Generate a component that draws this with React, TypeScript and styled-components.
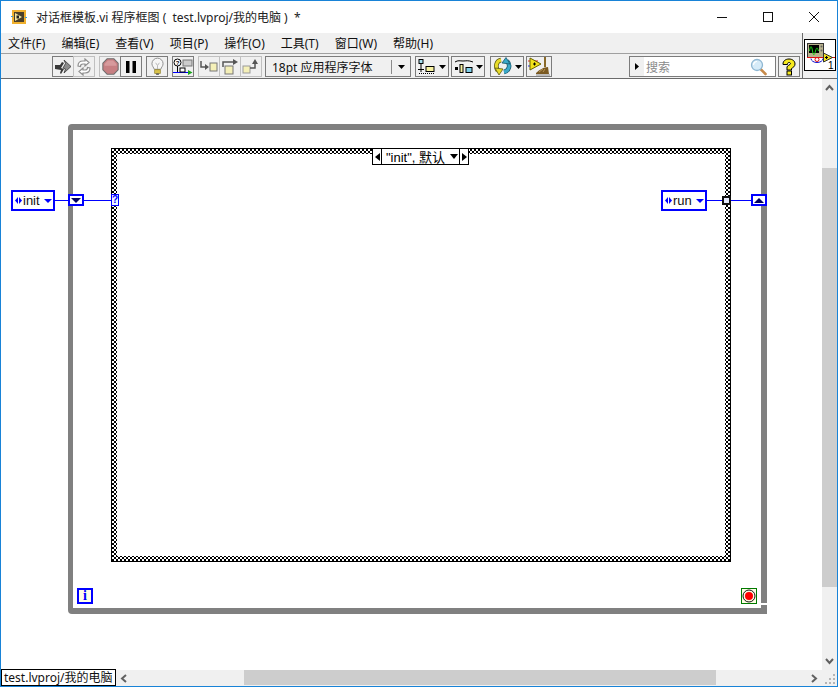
import React from 'react';
import styled, { createGlobalStyle } from 'styled-components';

const GlobalStyle = createGlobalStyle`
  html, body {
    margin: 0;
    padding: 0;
    background: #fff;
    overflow: hidden;
  }
`;

const UI_FONT = `"Noto Sans", "Noto Sans CJK SC", sans-serif`;
const LV_FONT = `"Liberation Sans", "Noto Sans CJK SC", sans-serif`;
const WIRE = '#0000ff';

// --- Window chrome ---
const Window = styled.div`
  width: 838px;
  height: 687px;
  box-sizing: border-box;
  border: 1px solid #1883d7;
  display: flex;
  flex-direction: column;
  background: #fff;
  font-family: ${UI_FONT};
  overflow: hidden;
`;

const TitleBar = styled.div`
  height: 32px;
  flex: none;
  display: flex;
  align-items: center;
  padding-left: 10px;
`;

const TitleText = styled.span`
  margin-left: 9px;
  font-size: 12px;
  color: #222;
  white-space: pre;
`;

const Caption = styled.div`
  margin-left: auto;
  display: flex;
`;

const CaptionButton = styled.div`
  width: 46px;
  height: 32px;
  display: flex;
  align-items: center;
  justify-content: center;
`;

const Upper = styled.div`
  flex: none;
  display: flex;
  height: 46px;
  box-sizing: border-box;
  background: #f0f0f0;
  border-bottom: 1px solid #6b6b6b;
`;

const Bars = styled.div`
  width: 801px;
  flex: none;
`;

const MenuBar = styled.div`
  height: 20px;
  display: flex;
  align-items: center;
  gap: 16px;
  padding-left: 7px;
  border-bottom: 1px solid #a0a0a0;
  font-size: 12px;
  color: #111;
`;

const ToolBar = styled.div`
  height: 24px;
  box-sizing: border-box;
  display: flex;
  align-items: flex-start;
  padding: 2px 0 0 51px;
`;

const ToolGroup = styled.div<{ $gap?: number }>`
  display: flex;
  margin-left: ${p => p.$gap ?? 0}px;
`;

const ToolButton = styled.div<{ $w?: number; $dim?: boolean; $flush?: boolean }>`
  width: ${p => p.$w ?? 22}px;
  height: 21px;
  box-sizing: border-box;
  border: 1px solid ${p => (p.$dim ? '#c0c0c0' : '#7c7c7c')};
  margin-left: ${p => (p.$flush ? -1 : 0)}px;
  display: flex;
  align-items: center;
  justify-content: center;
  gap: 2px;
`;

const FontRing = styled.div`
  width: 146px;
  height: 21px;
  margin-left: 3px;
  box-sizing: border-box;
  border: 1px solid #7c7c7c;
  display: flex;
  align-items: center;
  font-size: 12px;
  color: #111;
`;

const FontName = styled.span`
  flex: 1;
  padding-left: 6px;
`;

const FontArrow = styled.div`
  width: 18px;
  height: 14px;
  border-left: 1px solid #8a8a8a;
  display: flex;
  align-items: center;
  justify-content: center;
`;

const SearchBox = styled.div`
  width: 147px;
  height: 21px;
  margin-left: 77px;
  box-sizing: border-box;
  border: 1px solid #7c7c7c;
  display: flex;
  align-items: center;
`;

const SearchHandle = styled.div`
  width: 14px;
  height: 19px;
  flex: none;
  display: flex;
  align-items: center;
  justify-content: center;
`;

const SearchField = styled.div`
  flex: 1;
  height: 19px;
  background: #fff;
  display: flex;
  align-items: center;
  justify-content: space-between;
  padding: 0 7px 0 2px;
  font-size: 12px;
  color: #8a8a8a;
`;

const IconPaneSlot = styled.div`
  flex: 1;
  border-left: 1px solid #6b6b6b;
  padding: 6px 0 0 1px;
`;

const IconPane = styled.div`
  width: 32px;
  height: 32px;
  box-sizing: border-box;
  border: 1px solid #000;
  background: #fff;
  display: flex;
`;

// --- Body and scrollbars ---
const Body = styled.div`
  flex: 1;
  display: flex;
  min-height: 0;
`;

const Canvas = styled.div`
  position: relative;
  flex: 1;
  background: #fff;
  overflow: hidden;
`;

const VScroll = styled.div`
  width: 15px;
  flex: none;
  background: #f0f0f0;
  display: flex;
  flex-direction: column;
  align-items: center;
`;

const VGap = styled.div`
  height: 72px;
  flex: none;
`;

const VThumb = styled.div`
  width: 15px;
  height: 419px;
  flex: none;
  background: #cdcdcd;
`;

const VArrow = styled.div<{ $end?: boolean }>`
  margin-top: ${p => (p.$end ? 'auto' : '0')};
  height: 17px;
  flex: none;
  display: flex;
  align-items: center;
  justify-content: center;
`;

const BottomBar = styled.div`
  height: 16px;
  flex: none;
  display: flex;
  background: #f0f0f0;
`;

const StatusPath = styled.div`
  width: 115px;
  flex: none;
  box-sizing: border-box;
  background: #fff;
  border: 1px solid #000;
  margin-top: -1px;
  height: 17px;
  padding-left: 2px;
  font-family: ${UI_FONT};
  font-size: 12px;
  line-height: 15px;
  color: #111;
  white-space: nowrap;
  overflow: hidden;
  position: relative;
`;

const HArrow = styled.div`
  width: 16px;
  flex: none;
  display: flex;
  align-items: center;
  justify-content: center;
`;

const HTrack = styled.div`
  flex: 1;
  padding-left: 112px;
  padding-right: 89px;
`;

const HThumb = styled.div`
  height: 15px;
  background: #cdcdcd;
`;

const Grip = styled.div`
  width: 16px;
  flex: none;
  display: flex;
  align-items: flex-end;
  justify-content: flex-end;
`;

// --- Block diagram nodes (free canvas) ---
const WhileLoop = styled.div`
  position: absolute;
  left: 67px;
  top: 45px;
  width: 699px;
  height: 490px;
  box-sizing: border-box;
  border: solid #808080;
  border-width: 6px 6px 6px 5px;
  border-radius: 4px 4px 0 4px;
`;

const LoopNotch = styled.div`
  position: absolute;
  left: 759px;
  top: 524px;
  width: 7px;
  height: 2px;
  background: #fff;
`;

const CaseFrame = styled.div`
  position: absolute;
  left: 110px;
  top: 69px;
  width: 620px;
  height: 414px;
  box-sizing: border-box;
  border: 1px solid #000;
  padding: 5px;
  background-color: #fff;
  background-image: repeating-conic-gradient(#000 0 25%, #fff 0 50%);
  background-size: 4px 4px;
`;

const CaseInner = styled.div`
  width: 100%;
  height: 100%;
  background: #fff;
`;

const CaseSelector = styled.div`
  position: absolute;
  left: 371px;
  top: 69px;
  width: 97px;
  height: 17px;
  box-sizing: border-box;
  display: flex;
  background: #fff;
  border: 1px solid #000;
`;

const SelectorStep = styled.div`
  width: 8px;
  flex: none;
  display: flex;
  align-items: center;
  justify-content: center;
`;

const SelectorLabel = styled.div`
  flex: 1;
  border: solid #000;
  border-width: 0 1px;
  display: flex;
  align-items: center;
  padding: 0 1px 0 4px;
  font-family: ${LV_FONT};
  font-size: 13px;
  color: #000;
  white-space: pre;
`;

const SelectorText = styled.span`
  flex: 1;
`;

const EnumConstant = styled.div<{ $x: number; $w: number }>`
  position: absolute;
  left: ${p => p.$x}px;
  top: 111px;
  width: ${p => p.$w}px;
  height: 21px;
  box-sizing: border-box;
  border: 2px solid ${WIRE};
  background: #fff;
  display: flex;
  align-items: center;
  padding: 0 1px 0 2px;
  font-family: ${LV_FONT};
  font-size: 13px;
  color: #111;
`;

const EnumText = styled.span`
  margin-left: 1px;
  flex: 1;
`;

const Wire = styled.div<{ $x: number; $w: number }>`
  position: absolute;
  left: ${p => p.$x}px;
  top: 121px;
  width: ${p => p.$w}px;
  height: 1px;
  background: ${WIRE};
`;

const ShiftRegister = styled.div<{ $x: number }>`
  position: absolute;
  left: ${p => p.$x}px;
  top: 115px;
  width: 16px;
  height: 12px;
  box-sizing: border-box;
  border: 2px solid ${WIRE};
  background: #fff;
  display: flex;
  align-items: center;
  justify-content: center;
`;

const CaseTerminal = styled.div`
  position: absolute;
  left: 110px;
  top: 115px;
  width: 8px;
  height: 12px;
  box-sizing: border-box;
  border: 1px solid ${WIRE};
  background: #eef4ff;
  color: ${WIRE};
  font-family: ${LV_FONT};
  font-weight: 700;
  font-size: 10px;
  line-height: 10px;
  text-align: center;
`;

const Tunnel = styled.div`
  position: absolute;
  left: 721px;
  top: 117px;
  width: 9px;
  height: 9px;
  box-sizing: border-box;
  border: 2px solid #111;
  background: #e4e8fb;
`;

const IterationTerminal = styled.div`
  position: absolute;
  left: 76px;
  top: 509px;
  width: 16px;
  height: 16px;
  box-sizing: border-box;
  border: 2px solid ${WIRE};
  background: #ffffe6;
  color: ${WIRE};
  font-family: "Liberation Serif", serif;
  font-weight: 700;
  font-size: 14px;
  line-height: 12px;
  text-align: center;
`;

const StopTerminal = styled.div`
  position: absolute;
  left: 740px;
  top: 509px;
  width: 16px;
  height: 16px;
  box-sizing: border-box;
  border: 1px solid #007a00;
  background: #ffffe6;
  display: flex;
  align-items: center;
  justify-content: center;
`;

// --- Drawn icons ---
const Tri = ({ dir, color = '#000', w = 7, h = 4 }: { dir: 'up' | 'down' | 'left' | 'right'; color?: string; w?: number; h?: number }) => {
  const pts = {
    down: `0,0 ${w},0 ${w / 2},${h}`,
    up: `0,${h} ${w},${h} ${w / 2},0`,
    left: `${w},0 ${w},${h} 0,${h / 2}`,
    right: `0,0 0,${h} ${w},${h / 2}`,
  }[dir];
  return (
    <svg width={w} height={h} viewBox={`0 0 ${w} ${h}`}>
      <polygon points={pts} fill={color} />
    </svg>
  );
};

const LvTitleIcon = () => (
  <svg width="16" height="15" viewBox="0 0 16 15">
    <rect x="1" y="0" width="14" height="14" fill="#f0b02e" />
    <rect x="3" y="2" width="10" height="10" fill="#4a3f2a" />
    <polygon points="4,3 11,7 4,11" fill="#f4e6a0" />
    <rect x="5.500" y="5.500" width="2.500" height="3" fill="#222" />
    <path d="M0 6.500h2M14 7.500h2" stroke="#3f9fd0" />
  </svg>
);

// broken run arrow
const RunIcon = () => (
  <svg width="18" height="18" viewBox="0 0 18 18">
    <path d="M1 7h5l2-3 2 1-3 5 3 1-3 5-1-1 1-3-6-1z" fill="#3a3a3a" />
    <path d="M10 2l7 6.500-7 6.500 1.500-4-2.500-1 2.500-4.500z" fill="#8c8c8c" stroke="#3a3a3a" strokeWidth="0.800" strokeLinejoin="round" />
  </svg>
);

const RunContinuousIcon = () => (
  <svg width="18" height="18" viewBox="0 0 18 18" fill="none" stroke="#8e8e8e" strokeWidth="1.200">
    <path d="M3 8c0-3 2-5 5-5h2V1l4 3.500L10 8V6H8C6 6 5.500 7 5.500 8.500z" fill="#fff" />
    <path d="M15 10c0 3-2 5-5 5H8v2l-4-3.500L8 10v2h2c2 0 2.500-1 2.500-2.500z" fill="#fff" />
  </svg>
);

const AbortIcon = () => (
  <svg width="17" height="17" viewBox="0 0 20 20">
    <polygon points="6,1 14,1 19,6 19,14 14,19 6,19 1,14 1,6" fill="#c77f82" stroke="#6e6e6e" strokeWidth="1.200" />
    <polygon points="7,3 13,3 17,7 17,9 3,9 3,7" fill="#d79a9c" />
  </svg>
);

const PauseIcon = () => (
  <svg width="12" height="12" viewBox="0 0 12 12">
    <rect x="1" y="0" width="3.500" height="12" fill="#000" />
    <rect x="7.500" y="0" width="3.500" height="12" fill="#000" />
  </svg>
);

const BulbIcon = () => (
  <svg width="13" height="19" viewBox="0 0 14 20">
    <path d="M7 1a6 6 0 0 0-6 6c0 2.500 2 4 2.500 6h7C11 11 13 9.500 13 7a6 6 0 0 0-6-6z" fill="#f6f6f6" stroke="#8a8a8a" />
    <path d="M5 6l2 3 2-3M7 9v4" stroke="#b5b5b5" fill="none" />
    <rect x="4" y="13.500" width="6" height="4" fill="#d9c24a" stroke="#8a7a20" strokeWidth="0.700" />
    <rect x="5.500" y="17.500" width="3" height="1.500" fill="#555" />
  </svg>
);

const RetainIcon = () => (
  <svg width="20" height="18" viewBox="0 0 20 18">
    <circle cx="4.500" cy="4.500" r="3.500" fill="#fff" stroke="#000" />
    <text x="4.500" y="7" textAnchor="middle" fontSize="6" fontFamily="Liberation Sans" fontWeight="700">?</text>
    <rect x="10" y="2" width="9" height="6" fill="#ccc" stroke="#777" />
    <path d="M4.500 8v6" stroke="#000" />
    <path d="M0 14.500h16" stroke="#0000ff" />
    <rect x="7" y="10" width="5" height="4" fill="#fff" stroke="#000" />
    <polygon points="15,12 19.500,14.500 15,17" fill="#19a319" />
  </svg>
);

const StepIntoIcon = () => (
  <svg width="18" height="14" viewBox="0 0 18 14">
    <path d="M1 1v6h5" stroke="#555" strokeWidth="1.500" fill="none" />
    <polygon points="5,4 9,7 5,10" fill="#555" />
    <rect x="10" y="3" width="7" height="8" fill="#f5f0b8" stroke="#777" />
  </svg>
);

const StepOverIcon = () => (
  <svg width="18" height="16" viewBox="0 0 18 16">
    <path d="M2 8V3h10" stroke="#555" strokeWidth="1.500" fill="none" />
    <polygon points="12,0 17,3 12,6" fill="#555" />
    <rect x="4" y="7" width="8" height="8" fill="#f5f0b8" stroke="#777" />
  </svg>
);

const StepOutIcon = () => (
  <svg width="18" height="16" viewBox="0 0 18 16">
    <rect x="1" y="7" width="7" height="7" fill="#f5f0b8" stroke="#999" />
    <path d="M8 9h5V4" stroke="#555" strokeWidth="1.500" fill="none" />
    <polygon points="10,5 13,0 16,5" fill="#555" />
  </svg>
);

const AlignIcon = () => (
  <svg width="19" height="16" viewBox="0 0 19 16">
    <rect x="1" y="0.500" width="4" height="4" fill="#a6e0f2" stroke="#000" />
    <path d="M3 5v8M0 10.500h6" stroke="#000" />
    <rect x="8" y="7.500" width="8" height="5" fill="#f7f2a0" stroke="#000" />
    <path d="M1 14.500h16" stroke="#000" strokeDasharray="1 1" />
  </svg>
);

const DistributeIcon = () => (
  <svg width="20" height="16" viewBox="0 0 20 16">
    <path d="M1 3c3-2 5-1 8-1s5-1 10 1" stroke="#000" fill="none" />
    <rect x="1" y="8" width="3" height="3" fill="#000" />
    <rect x="6" y="5.500" width="3" height="8" fill="#f7f2a0" stroke="#000" />
    <rect x="12" y="8.500" width="6" height="5" fill="#7fd0ea" stroke="#000" />
  </svg>
);

const ReorderIcon = () => (
  <svg width="20" height="19" viewBox="0 0 20 19">
    <path d="M8 3C3 4 2 10 5 14" fill="none" stroke="#5d5a10" strokeWidth="4.500" />
    <path d="M8 3C3 4 2 10 5 14" fill="none" stroke="#e8dc2a" strokeWidth="3" />
    <polygon points="2,11 10,12 6,18" fill="#e8dc2a" stroke="#5d5a10" strokeWidth="0.800" />
    <path d="M11 15c5-1 7-7 3-11" fill="none" stroke="#17566a" strokeWidth="4.500" />
    <path d="M11 15c5-1 7-7 3-11" fill="none" stroke="#3ba9c9" strokeWidth="3" />
    <polygon points="17,7 9,6 13,0.500" fill="#3ba9c9" stroke="#17566a" strokeWidth="0.800" />
  </svg>
);

const CleanupIcon = () => (
  <svg width="22" height="19" viewBox="0 0 22 19">
    <path d="M0 4h10" stroke="#d22" />
    <path d="M0 9h8" stroke="#22d" />
    <polygon points="2,1 13,7 2,13" fill="#f2e21c" stroke="#6a6200" />
    <path d="M5 7h3M6.500 5.500v3" stroke="#000" />
    <rect x="16" y="0" width="2" height="10" fill="#8a6a2a" />
    <path d="M8 16c3-3 8-6 12-6l1 7H8z" fill="#7a5a22" />
    <path d="M11 15l4-3M15 15l2-3" stroke="#b8965a" />
    <path d="M8 17h14v2H8z" fill="#bcbcbc" />
  </svg>
);

const HelpIcon = () => (
  <svg width="14" height="18" viewBox="0 0 14 18">
    <path d="M1 6c0-3 2.500-5 6-5s6 2 6 5c0 2.500-2 3.500-3.500 4.500V12H5V9c0-1.500 3.500-2 3.500-3.500C8.500 5 8 4.500 7 4.500S5.500 5 5.500 6.500H1z" fill="#f7ea1f" stroke="#000" strokeLinejoin="round" />
    <rect x="5" y="13" width="4.500" height="4" fill="#f7ea1f" stroke="#000" />
  </svg>
);

const SearchGlass = () => (
  <svg width="18" height="18" viewBox="0 0 18 18">
    <path d="M10.500 11l5 5" stroke="#c78a4a" strokeWidth="2.600" strokeLinecap="round" />
    <circle cx="7" cy="7" r="5.500" fill="#d6ebf8" stroke="#8fb7d2" strokeWidth="1.300" />
    <path d="M3.500 7a3.500 3.500 0 0 1 3.500-3.500" stroke="#fff" strokeWidth="1.200" fill="none" />
  </svg>
);

const VIIcon = () => (
  <svg width="30" height="30" viewBox="0 0 30 30">
    <rect x="2.500" y="3.500" width="16" height="14" fill="#b8b28c" stroke="#333" />
    <rect x="4" y="5" width="10" height="8" fill="#000" />
    <path d="M4.500 11c1-6 2-6 3 0s2 4 3 0 2-4 3 0" stroke="#18d018" fill="none" />
    <circle cx="16.500" cy="6.500" r="1" fill="#666" />
    <circle cx="16.500" cy="10.500" r="1" fill="#666" />
    <path d="M2 17.500h28" stroke="#e01010" />
    <path d="M6 18.500a6 4 0 0 0 12 0" stroke="#1010d0" fill="none" />
    <circle cx="12" cy="19.500" r="2" fill="none" stroke="#e01010" />
    <polygon points="18.500,13 27.500,17.500 18.500,22" fill="#f2e21c" stroke="#333" />
    <path d="M20 17.500h3M21.500 16v3" stroke="#000" />
    <text x="28.500" y="28.500" textAnchor="end" fontSize="10" fontFamily="Liberation Sans">1</text>
  </svg>
);

const EnumArrows = () => (
  <svg width="7" height="7" viewBox="0 0 7 7">
    <polygon points="3,0 3,7 0,3.500" fill={WIRE} />
    <polygon points="4,0 4,7 7,3.500" fill={WIRE} />
  </svg>
);

const StopIcon = () => (
  <svg width="14" height="14" viewBox="0 0 14 14">
    <circle cx="7" cy="7" r="6" fill="#fff8e0" stroke="#111" />
    <circle cx="7" cy="7" r="4" fill="#ff0000" />
  </svg>
);

const Chevron = ({ d }: { d: string }) => (
  <svg width="9" height="9" viewBox="0 0 9 9">
    <path d={d} fill="none" stroke="#606060" strokeWidth="2" />
  </svg>
);

const menus = ['文件(F)', '编辑(E)', '查看(V)', '项目(P)', '操作(O)', '工具(T)', '窗口(W)', '帮助(H)'];

export default function App() {
  return (
    <Window>
      <GlobalStyle />
      <TitleBar>
        <LvTitleIcon />
        <TitleText>{'对话框模板.vi 程序框图 (  test.lvproj/我的电脑 )  *'}</TitleText>
        <Caption>
          <CaptionButton>
            <svg width="10" height="10" viewBox="0 0 10 10"><path d="M0 5.500h10" stroke="#111" /></svg>
          </CaptionButton>
          <CaptionButton>
            <svg width="10" height="10" viewBox="0 0 10 10"><rect x="0.500" y="0.500" width="9" height="9" fill="none" stroke="#111" /></svg>
          </CaptionButton>
          <CaptionButton>
            <svg width="10" height="10" viewBox="0 0 10 10"><path d="M0 0l10 10M10 0L0 10" stroke="#111" /></svg>
          </CaptionButton>
        </Caption>
      </TitleBar>

      <Upper>
        <Bars>
          <MenuBar>
            {menus.map(m => <span key={m}>{m}</span>)}
          </MenuBar>
          <ToolBar>
            <ToolGroup>
              <ToolButton><RunIcon /></ToolButton>
              <ToolButton $dim $flush><RunContinuousIcon /></ToolButton>
            </ToolGroup>
            <ToolGroup $gap={4}>
              <ToolButton $dim><AbortIcon /></ToolButton>
              <ToolButton $flush><PauseIcon /></ToolButton>
            </ToolGroup>
            <ToolGroup $gap={4}>
              <ToolButton><BulbIcon /></ToolButton>
            </ToolGroup>
            <ToolGroup $gap={4}>
              <ToolButton><RetainIcon /></ToolButton>
            </ToolGroup>
            <ToolGroup $gap={4}>
              <ToolButton $dim><StepIntoIcon /></ToolButton>
              <ToolButton $dim $flush><StepOverIcon /></ToolButton>
              <ToolButton $dim $flush><StepOutIcon /></ToolButton>
            </ToolGroup>
            <FontRing>
              <FontName>18pt 应用程序字体</FontName>
              <FontArrow><Tri dir="down" /></FontArrow>
            </FontRing>
            <ToolGroup $gap={4}>
              <ToolButton $w={34}><AlignIcon /><Tri dir="down" /></ToolButton>
            </ToolGroup>
            <ToolGroup $gap={2}>
              <ToolButton $w={34}><DistributeIcon /><Tri dir="down" /></ToolButton>
            </ToolGroup>
            <ToolGroup $gap={5}>
              <ToolButton $w={34}><ReorderIcon /><Tri dir="down" /></ToolButton>
            </ToolGroup>
            <ToolGroup $gap={2}>
              <ToolButton $w={26}><CleanupIcon /></ToolButton>
            </ToolGroup>
            <SearchBox>
              <SearchHandle><Tri dir="right" w={4} h={7} /></SearchHandle>
              <SearchField>
                <span>搜索</span>
                <SearchGlass />
              </SearchField>
            </SearchBox>
            <ToolGroup $gap={2}>
              <ToolButton><HelpIcon /></ToolButton>
            </ToolGroup>
          </ToolBar>
        </Bars>
        <IconPaneSlot>
          <IconPane><VIIcon /></IconPane>
        </IconPaneSlot>
      </Upper>

      <Body>
        <Canvas>
          <WhileLoop />
          <LoopNotch />
          <CaseFrame><CaseInner /></CaseFrame>
          <CaseSelector>
            <SelectorStep><Tri dir="left" w={5} h={8} /></SelectorStep>
            <SelectorLabel>
              <SelectorText>"init", 默认</SelectorText>
              <Tri dir="down" w={8} h={5} />
            </SelectorLabel>
            <SelectorStep><Tri dir="right" w={5} h={8} /></SelectorStep>
          </CaseSelector>

          <EnumConstant $x={10} $w={44}>
            <EnumArrows />
            <EnumText>init</EnumText>
            <Tri dir="down" color={WIRE} w={8} h={4} />
          </EnumConstant>
          <Wire $x={54} $w={14} />
          <ShiftRegister $x={67}><Tri dir="down" color="#000060" w={10} h={5} /></ShiftRegister>
          <Wire $x={83} $w={28} />
          <CaseTerminal>?</CaseTerminal>

          <EnumConstant $x={660} $w={46}>
            <EnumArrows />
            <EnumText>run</EnumText>
            <Tri dir="down" color={WIRE} w={8} h={4} />
          </EnumConstant>
          <Wire $x={706} $w={16} />
          <Tunnel />
          <Wire $x={730} $w={20} />
          <ShiftRegister $x={750}><Tri dir="up" color="#000060" w={10} h={5} /></ShiftRegister>

          <IterationTerminal>i</IterationTerminal>
          <StopTerminal><StopIcon /></StopTerminal>
        </Canvas>
        <VScroll>
          <VArrow><Chevron d="M1 7l3.500-4L8 7" /></VArrow>
          <VGap />
          <VThumb />
          <VArrow $end><Chevron d="M1 2l3.500 4L8 2" /></VArrow>
        </VScroll>
      </Body>

      <BottomBar>
        <StatusPath>test.lvproj/我的电脑</StatusPath>
        <HArrow><Chevron d="M6 1L2 4.500 6 8" /></HArrow>
        <HTrack><HThumb /></HTrack>
        <HArrow><Chevron d="M3 1l4 3.500L3 8" /></HArrow>
        <Grip>
          <svg width="12" height="12" viewBox="0 0 12 12" fill="#b5b5b5">
            <rect x="8" y="0" width="2" height="2" />
            <rect x="4" y="4" width="2" height="2" />
            <rect x="8" y="4" width="2" height="2" />
            <rect x="0" y="8" width="2" height="2" />
            <rect x="4" y="8" width="2" height="2" />
            <rect x="8" y="8" width="2" height="2" />
          </svg>
        </Grip>
      </BottomBar>
    </Window>
  );
}
